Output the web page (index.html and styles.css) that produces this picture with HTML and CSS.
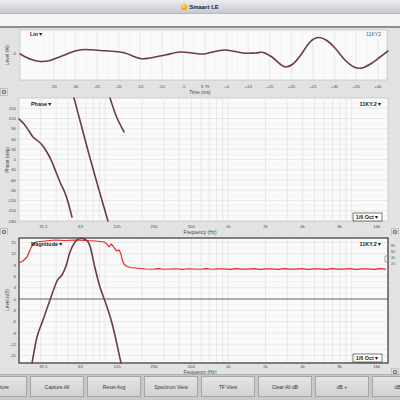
FILE: index.html
```html
<!DOCTYPE html>
<html lang="en">
<head>
    <meta charset="UTF-8">
    <meta name="viewport" content="width=device-width, initial-scale=1.0">
    <title>Smaart LE</title>
    <link rel="stylesheet" href="styles.css">
</head>
<body>
    <div class="window">
        <div class="titlebar"><span class="app-icon"></span>Smaart LE</div>
        <div class="toolbar"></div>
        <div class="panel">
            <svg id="linChart" width="400" height="69" viewBox="0 28 400 69"></svg>
        </div>
        <div class="panel">
            <svg id="phaseChart" width="400" height="138" viewBox="0 97 400 138"></svg>
        </div>
        <div class="panel">
            <svg id="magChart" width="400" height="139" viewBox="0 235 400 139"></svg>
        </div>
        <div class="buttons">
            <div class="btn">Capture</div>
            <div class="btn">Capture All</div>
            <div class="btn">Reset Avg</div>
            <div class="btn">Spectrum View</div>
            <div class="btn">TF View</div>
            <div class="btn">Clear All dB</div>
            <div class="btn">dB +</div>
            <div class="btn">dB -</div>
        </div>
    </div>
    <script>
        const NS = 'http://www.w3.org/2000/svg';
        const TRACE = '#6b3c47';

        function el(svg, tag, attrs, text) {
            const node = document.createElementNS(NS, tag);
            for (const key in attrs) node.setAttribute(key, attrs[key]);
            if (text !== undefined) node.textContent = text;
            svg.appendChild(node);
            return node;
        }

        function freqX(f) {
            return 19 + 37.1 * Math.log2(f / 20);
        }

        // catmull-rom through the points, so traces look smooth
        function smoothPath(pts) {
            let d = `M${pts[0][0]},${pts[0][1]}`;
            for (let i = 0; i < pts.length - 1; i++) {
                const p0 = pts[i - 1] || pts[i], p1 = pts[i], p2 = pts[i + 1], p3 = pts[i + 2] || p2;
                const c1x = p1[0] + (p2[0] - p0[0]) / 6, c1y = p1[1] + (p2[1] - p0[1]) / 6;
                const c2x = p2[0] - (p3[0] - p1[0]) / 6, c2y = p2[1] - (p3[1] - p1[1]) / 6;
                d += ` C${c1x},${c1y} ${c2x},${c2y} ${p2[0]},${p2[1]}`;
            }
            return d;
        }

        function gear(svg, x, y) {
            el(svg, 'rect', { x: x - 3.5, y: y - 3.5, width: 7, height: 7, class: 'gear-box' });
            el(svg, 'circle', { cx: x, cy: y, r: 2.3, class: 'gear' });
            el(svg, 'circle', { cx: x, cy: y, r: 0.9, class: 'gear-hole' });
        }

        function freqAxis(svg, top, bottom, labelY) {
            [10, 100, 1000, 10000].forEach(decade => {
                for (let m = 1; m < 10; m++) {
                    const f = decade * m;
                    if (f <= 20 || f >= 20000) continue;
                    const x = freqX(f);
                    el(svg, 'line', { x1: x, y1: top, x2: x, y2: bottom, class: 'grid' });
                }
            });
            const labels = [[31.5, '31.5'], [63, '63'], [125, '125'], [250, '250'], [500, '500'],
                [1000, '1k'], [2000, '2k'], [4000, '4k'], [8000, '8k'], [16000, '16k']];
            labels.forEach(([f, txt]) => {
                el(svg, 'text', { x: freqX(f), y: labelY, class: 'tick mid' }, txt);
            });
            el(svg, 'text', { x: 200, y: labelY + 6, class: 'axis-name mid' }, 'Frequency (Hz)');
        }

        function octBox(svg, y) {
            el(svg, 'rect', { x: 353, y: y, width: 29, height: 8, class: 'oct-box' });
            el(svg, 'text', { x: 367.5, y: y + 6, class: 'overlay mid' }, '1/6 Oct\u25BC');
        }

        function drawLin() {
            const svg = document.getElementById('linChart');
            el(svg, 'rect', { x: 20, y: 30, width: 367, height: 50, class: 'plot' });
            const ticks = ['-35', '-30', '-25', '-20', '-15', '-10', '-5', '3.79',
                '+5', '+10', '+15', '+20', '+25', '+30', '+35', '+40'];
            ticks.forEach((txt, i) => {
                const x = 53.8 + 21.6 * i;
                el(svg, 'line', { x1: x, y1: 30, x2: x, y2: 80, class: 'grid' });
                el(svg, 'line', { x1: x - 10.8, y1: 30, x2: x - 10.8, y2: 80, class: 'grid-minor' });
                el(svg, 'text', { x: x, y: 87.5, class: 'tick mid' }, txt);
            });
            el(svg, 'text', { x: 16, y: 55, class: 'tick end' }, '0');
            el(svg, 'text', { x: 0, y: 0, class: 'axis-name mid', transform: 'translate(8.5 55) rotate(-90)' }, 'Level (%)');
            el(svg, 'text', { x: 200, y: 94, class: 'axis-name mid' }, 'Time (ms)');
            el(svg, 'text', { x: 30, y: 36, class: 'overlay' }, 'Lin\u25BC');
            el(svg, 'text', { x: 381, y: 36, class: 'overlay-light end' }, '11KY2');

            const wave = [[20, 54], [30, 59], [40, 61.5], [50, 60.5], [62, 56], [75, 51], [85, 49.5],
                [100, 50.5], [115, 51.5], [125, 53], [140, 58.5], [150, 58], [165, 55], [180, 52],
                [192, 53], [204, 54], [215, 51.5], [226, 50], [243, 53], [255, 53], [263, 52.5],
                [272, 57], [280, 64], [286, 67], [293, 64], [300, 56], [310, 42], [318, 37.5],
                [326, 40], [335, 48], [345, 60], [354, 67], [362, 68], [372, 63], [380, 57], [388, 51]];
            el(svg, 'path', { d: smoothPath(wave), class: 'trace' });
            gear(svg, 4, 92);
        }

        function drawPhase() {
            const svg = document.getElementById('phaseChart');
            const y = v => 159.5 - v * 0.3417;
            el(svg, 'rect', { x: 19, y: 98, width: 369, height: 123, class: 'plot' });
            for (let v = -165; v < 180; v += 15) {
                el(svg, 'line', { x1: 19, y1: y(v), x2: 388, y2: y(v), class: v % 30 ? 'grid-minor' : 'grid' });
            }
            for (let v = 150; v >= -180; v -= 30) {
                el(svg, 'text', { x: 16, y: y(v) + 1.6, class: 'tick end' }, v);
            }
            freqAxis(svg, 98, 221, 228);
            el(svg, 'text', { x: 0, y: 0, class: 'axis-name mid', transform: 'translate(8.5 160) rotate(-90)' }, 'Phase (deg)');

            const lines = [
                [[19, 119], [24, 124], [29, 131], [33, 137], [38, 141], [43, 146], [48, 154],
                    [52, 162], [56, 172], [60, 182], [65, 193], [68, 202], [72, 217]],
                [[74, 98], [82, 128], [90, 158], [99, 190], [108, 221]],
                [[110, 98], [113, 107], [117, 118], [124, 132]]
            ];
            lines.forEach(pts => el(svg, 'path', { d: smoothPath(pts), class: 'trace' }));

            el(svg, 'text', { x: 31, y: 106, class: 'overlay' }, 'Phase\u25BC');
            el(svg, 'text', { x: 382, y: 106, class: 'overlay end' }, '11KY.2\u25BC');
            octBox(svg, 213);
            gear(svg, 4, 232);
            gear(svg, 395, 232);
        }

        function drawMag() {
            const svg = document.getElementById('magChart');
            const y = db => 299 - db * 3.77;
            el(svg, 'rect', { x: 19, y: 238, width: 369, height: 125, class: 'plot' });
            for (let db = -16.5; db <= 16.5; db += 1.5) {
                el(svg, 'line', { x1: 19, y1: y(db), x2: 388, y2: y(db), class: db % 3 ? 'grid-minor' : 'grid' });
            }
            for (let db = 15; db >= -15; db -= 3) {
                el(svg, 'text', { x: 16, y: y(db) + 1.6, class: 'tick end' }, db);
            }
            freqAxis(svg, 238, 363, 368);
            el(svg, 'line', { x1: 19, y1: 299, x2: 388, y2: 299, class: 'zero-line' });
            el(svg, 'rect', { x: 19, y: 238, width: 369, height: 125, class: 'plot-frame' });
            el(svg, 'text', { x: 0, y: 0, class: 'axis-name mid', transform: 'translate(8.5 300) rotate(-90)' }, 'Level (dB)');

            // measured transfer function, ragged around the crossover
            const red = [[19, 263], [23, 261], [27, 257], [30, 250], [33, 244], [36, 242], [45, 241],
                [55, 240], [65, 240.5], [75, 240], [85, 240.5], [95, 241], [100, 241.5], [104, 242],
                [107, 244], [109, 247], [111, 244], [113, 246], [115, 249], [117, 251], [119, 250],
                [121, 254], [122, 259], [124, 264], [126, 266], [130, 267.5], [140, 268.5]];
            for (let x = 146; x <= 388; x += 6) {
                red.push([x, 269 + Math.sin(x * 1.7) * 0.35]);
            }
            el(svg, 'polyline', { points: red.map(p => p.join(',')).join(' '), class: 'trace-red' });

            const filter = [[32, 363], [37, 337], [43, 320], [50, 300], [57, 281], [62, 275],
                [66, 266], [70, 252], [75, 242], [80, 238.5], [86, 240], [90, 246], [95, 268],
                [100, 287], [107, 307], [113, 327], [121, 363]];
            el(svg, 'path', { d: smoothPath(filter), class: 'trace' });

            el(svg, 'text', { x: 31, y: 246, class: 'overlay' }, 'Magnitude\u25BC');
            el(svg, 'text', { x: 382, y: 246, class: 'overlay end' }, '11KY.2\u25BC');
            octBox(svg, 354);

            ['80', '60', '40', '20'].forEach((txt, i) => {
                el(svg, 'text', { x: 391, y: 246.5 + i * 6, class: 'scale' }, txt);
            });
            el(svg, 'path', { d: 'M387,256 h-2 v6 h2', class: 'bracket' });
            gear(svg, 395, 372);
        }

        document.addEventListener('DOMContentLoaded', function() {
            drawLin();
            drawPhase();
            drawMag();
        });
    </script>
</body>
</html>
```

FILE: styles.css
```css
body {
    margin: 0;
    font-family: 'Liberation Sans', Arial, sans-serif;
    background: #cfcfcf;
}
.window {
    width: 400px;
    height: 400px;
    overflow: hidden;
    background: #e2e2e2;
}
.titlebar {
    height: 13px;
    background: linear-gradient(#ecedf1, #c8c9d0);
    display: flex;
    align-items: center;
    justify-content: center;
    font-size: 6px;
    font-weight: bold;
    color: #222;
}
.app-icon {
    width: 6px;
    height: 6px;
    border-radius: 50%;
    background: radial-gradient(circle at 40% 35%, #ffe27a, #f2a20c 60%, #b86f00);
    margin-right: 2px;
}
.toolbar {
    height: 12px;
    background: #f5f5f5;
    border-top: 1px solid #b9b9b9;
    border-bottom: 2px solid #8e8e8e;
}
.panel svg {
    display: block;
}
.plot {
    fill: #fafafa;
    stroke: #b8b8b8;
    stroke-width: 0.6;
}
.plot-frame {
    fill: none;
    stroke: #1e1e1e;
    stroke-width: 1;
}
.grid {
    stroke: #dedede;
    stroke-width: 0.6;
}
.grid-minor {
    stroke: #ededed;
    stroke-width: 0.5;
}
.zero-line {
    stroke: #4a4a4a;
    stroke-width: 0.8;
}
.trace {
    fill: none;
    stroke: #6b3c47;
    stroke-width: 1.6;
    stroke-linejoin: round;
    stroke-linecap: round;
}
.trace-red {
    fill: none;
    stroke: #e8242a;
    stroke-width: 1.2;
    stroke-linejoin: round;
}
.tick {
    font-size: 4.3px;
    fill: #4a4a4a;
}
.axis-name {
    font-size: 4.8px;
    fill: #444;
}
.overlay {
    font-size: 5.4px;
    font-weight: bold;
    fill: #1a1a1a;
}
.overlay-light {
    font-size: 5px;
    fill: #555;
}
.scale {
    font-size: 3.6px;
    fill: #555;
}
.bracket {
    fill: none;
    stroke: #777;
    stroke-width: 0.6;
}
.mid {
    text-anchor: middle;
}
.end {
    text-anchor: end;
}
.oct-box {
    fill: #fff;
    stroke: #222;
    stroke-width: 0.6;
}
.gear-box {
    fill: #e6e6e6;
    stroke: #a0a0a0;
    stroke-width: 0.5;
}
.gear {
    fill: #7a7a7a;
}
.gear-hole {
    fill: #e6e6e6;
}
.buttons {
    height: 26px;
    display: flex;
    gap: 3px;
    padding-top: 1px;
    box-sizing: border-box;
    background: #c9c9c9;
    border-top: 1px solid #b0b0b0;
}
.btn {
    flex-shrink: 0;
    width: 54px;
    height: 21px;
    box-sizing: border-box;
    border: 1px solid #a5a5a5;
    background: linear-gradient(#e4e4e4, #d2d2d2);
    display: flex;
    align-items: center;
    justify-content: center;
    font-size: 5px;
    color: #333;
    white-space: nowrap;
}
.btn:first-child {
    margin-left: -27px;
}
```
